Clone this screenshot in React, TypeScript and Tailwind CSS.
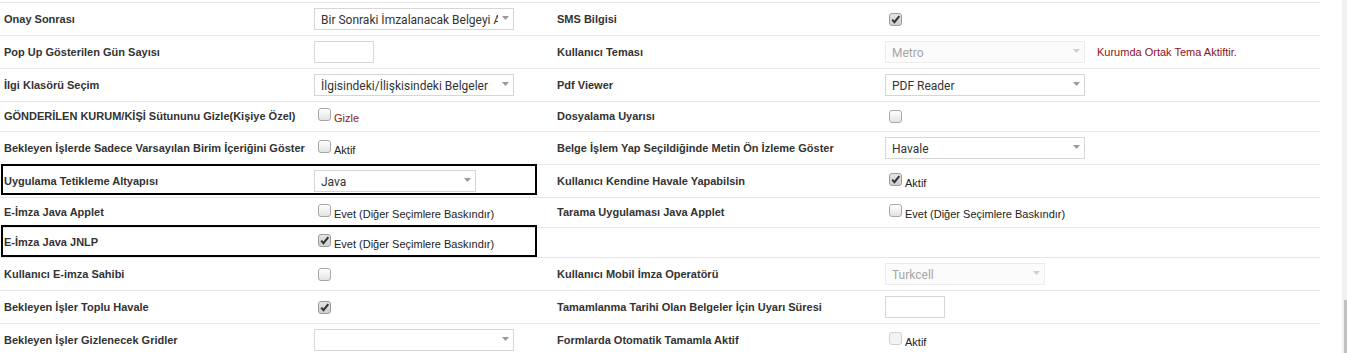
import React from "react";

type CheckProps = { checked?: boolean; disabled?: boolean; text?: string; textClass?: string };

function Check({ checked, disabled, text, textClass }: CheckProps) {
  const box = disabled
    ? "border-[#d0d0d0] bg-[#f3f3f3]"
    : checked
      ? "border-[#9c9c9c] bg-gradient-to-b from-[#e4e4e4] to-[#cfcfcf]"
      : "border-[#a8a8a8] bg-gradient-to-b from-white to-[#e3e3e3]";
  return (
    <div className="flex items-start pl-[4px]">
      <span className={`relative w-[13px] h-[13px] shrink-0 rounded-[3px] border ${box}`}>
        {checked && (
          <svg className="absolute left-0 top-0" width="11" height="11" viewBox="0 0 11 11">
            <path d="M2.2 5.6l2.3 2.6L9.3 2.2" fill="none" stroke="#333" strokeWidth="2.1" />
          </svg>
        )}
      </span>
      {text && (
        <span className={`ml-[3px] mt-[4px] leading-[13px] whitespace-nowrap ${textClass ?? "text-[#222]"}`}>
          {text}
        </span>
      )}
    </div>
  );
}

type SelectProps = { w: string; value?: string; disabled?: boolean };

function Select({ w, value, disabled }: SelectProps) {
  return (
    <div
      className={`flex items-center h-[22px] ${w} border pl-[6px] pr-[4px] font-['Roboto',sans-serif] text-[12px] ${
        disabled ? "border-[#ececec] bg-[#fbfbfb] text-[#a6a6a6]" : "border-[#d6d6d6] bg-white text-[#333]"
      }`}
    >
      <span className="flex-1 overflow-hidden whitespace-nowrap leading-[14px] pt-[2px]">{value}</span>
      <svg className="ml-[4px] mb-[3px] shrink-0" width="7" height="4" viewBox="0 0 7 4">
        <path d="M0 0h7L3.5 4z" fill={disabled ? "#cfcfcf" : "#9a9a9a"} />
      </svg>
    </div>
  );
}

function TextBox() {
  return <div className="w-[60px] h-[22px] border border-[#d6d6d6] bg-white" />;
}

function Row({
  left,
  leftCtl,
  right,
  rightCtl,
  tall = true,
  boxed,
}: {
  left: string;
  leftCtl?: React.ReactNode;
  right?: string;
  rightCtl?: React.ReactNode;
  tall?: boolean;
  boxed?: "a" | "b";
}) {
  return (
    <div
      className={`relative grid grid-cols-[314px_239px_332px_435px] items-center border-t border-[#e6e6e6] ${
        tall ? "h-[33px]" : "h-[30px]"
      }`}
    >
      <div className="pl-[4px] font-bold text-[#333] whitespace-nowrap">{left}</div>
      <div className="flex items-center">{leftCtl}</div>
      <div className="pl-[4px] font-bold text-[#333] whitespace-nowrap">{right}</div>
      <div className="flex items-center">{rightCtl}</div>
      {boxed === "a" && (
        <div className="absolute left-[1px] top-[-1px] w-[536px] h-[31px] border-2 border-black" />
      )}
      {boxed === "b" && (
        <div className="absolute left-[1px] top-[-3px] w-[536px] h-[32px] border-2 border-black" />
      )}
    </div>
  );
}

const EVET = "Evet (Diğer Seçimlere Baskındır)";

export default function App() {
  return (
    <div className="flex w-[1347px] h-[353px] overflow-hidden bg-white font-['Liberation_Sans',Arial,sans-serif] text-[11px]">
      <div className="w-[1320px] shrink-0 pt-[2px]">
        <Row
          left="Onay Sonrası"
          leftCtl={<Select w="w-[200px]" value="Bir Sonraki İmzalanacak Belgeyi Açsın" />}
          right="SMS Bilgisi"
          rightCtl={<Check checked />}
        />
        <Row
          left="Pop Up Gösterilen Gün Sayısı"
          leftCtl={<TextBox />}
          right="Kullanıcı Teması"
          rightCtl={
            <>
              <Select w="w-[200px]" value="Metro" disabled />
              <span className="ml-[12px] text-[#8f0f1e] whitespace-nowrap">Kurumda Ortak Tema Aktiftir.</span>
            </>
          }
        />
        <Row
          left="İlgi Klasörü Seçim"
          leftCtl={<Select w="w-[200px]" value="İlgisindeki/İlişkisindeki Belgeler" />}
          right="Pdf Viewer"
          rightCtl={<Select w="w-[200px]" value="PDF Reader" />}
        />
        <Row
          tall={false}
          left="GÖNDERİLEN KURUM/KİŞİ Sütununu Gizle(Kişiye Özel)"
          leftCtl={<Check text="Gizle" textClass="text-[#8a1c1c]" />}
          right="Dosyalama Uyarısı"
          rightCtl={<Check />}
        />
        <Row
          left="Bekleyen İşlerde Sadece Varsayılan Birim İçeriğini Göster"
          leftCtl={<Check text="Aktif" />}
          right="Belge İşlem Yap Seçildiğinde Metin Ön İzleme Göster"
          rightCtl={<Select w="w-[200px]" value="Havale" />}
        />
        <Row
          boxed="a"
          left="Uygulama Tetikleme Altyapısı"
          leftCtl={<Select w="w-[162px]" value="Java" />}
          right="Kullanıcı Kendine Havale Yapabilsin"
          rightCtl={<Check checked text="Aktif" />}
        />
        <Row
          tall={false}
          left="E-İmza Java Applet"
          leftCtl={<Check text={EVET} />}
          right="Tarama Uygulaması Java Applet"
          rightCtl={<Check text={EVET} />}
        />
        <Row tall={false} boxed="b" left="E-İmza Java JNLP" leftCtl={<Check checked text={EVET} />} />
        <Row
          left="Kullanıcı E-imza Sahibi"
          leftCtl={<Check />}
          right="Kullanıcı Mobil İmza Operatörü"
          rightCtl={<Select w="w-[160px]" value="Turkcell" disabled />}
        />
        <Row
          left="Bekleyen İşler Toplu Havale"
          leftCtl={<Check checked />}
          right="Tamamlanma Tarihi Olan Belgeler İçin Uyarı Süresi"
          rightCtl={<TextBox />}
        />
        <Row
          left="Bekleyen İşler Gizlenecek Gridler"
          leftCtl={<Select w="w-[200px]" value="" />}
          right="Formlarda Otomatik Tamamla Aktif"
          rightCtl={<Check disabled text="Aktif" />}
        />
      </div>
      <div className="flex-1" />
      <div className="w-[5px] h-full bg-[#f1f1f1] flex flex-col">
        <div className="mt-[300px] ml-[2px] flex-1 bg-[#c1c1c1]" />
      </div>
    </div>
  );
}
